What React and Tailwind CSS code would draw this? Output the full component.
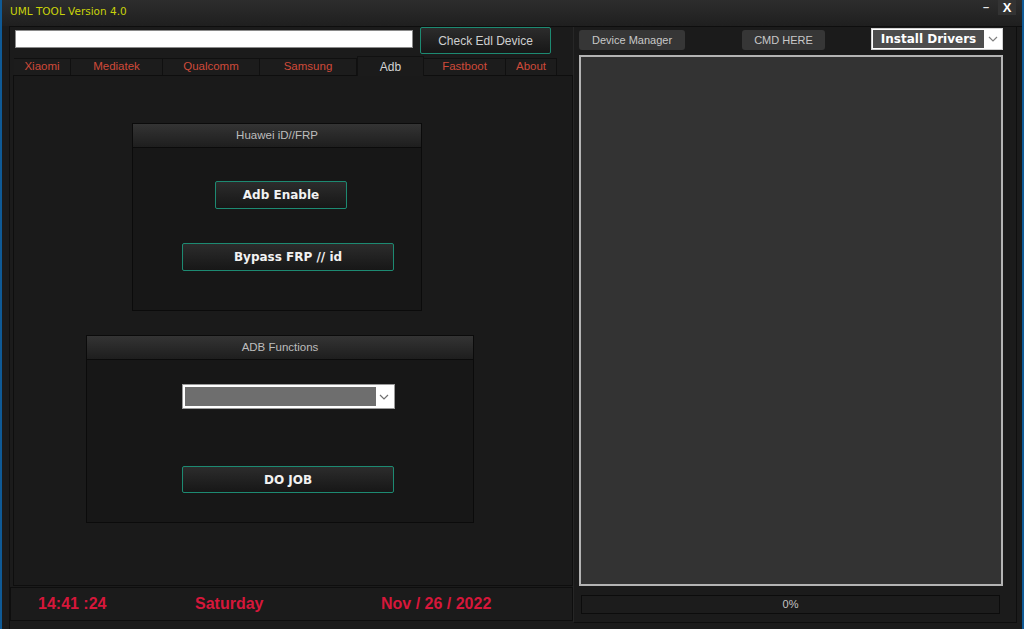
import React from "react";

const tabs = [
  { label: "Xiaomi", w: "w-[57px]" },
  { label: "Mediatek", w: "w-[92px]" },
  { label: "Qualcomm", w: "w-[97px]" },
  { label: "Samsung", w: "w-[97px]" },
  { label: "Adb", w: "w-[67px]", active: true },
  { label: "Fastboot", w: "w-[82px]" },
  { label: "About", w: "w-[51px]" },
];

const Chevron = ({ className }) => (
  <svg width="10" height="6" viewBox="0 0 10 6" className={className}>
    <path d="M1 1 L5 5 L9 1" fill="none" stroke="currentColor" strokeWidth="1.2" />
  </svg>
);

const TealButton = ({ children, className }) => (
  <button className={`flex items-center justify-center border border-[#1d8a72] rounded-[2px] bg-gradient-to-b from-[#2c2c2c] to-[#171717] text-[12px] font-bold text-[#f2f2f2] font-['DejaVu_Sans',sans-serif] ${className}`}>
    {children}
  </button>
);

const GroupBox = ({ title, className, children }) => (
  <div className={`flex flex-col border border-[#0b0b0b] bg-[#171717] ${className}`}>
    <div className="h-[24px] flex items-center justify-center bg-gradient-to-b from-[#343434] to-[#1e1e1e] border-b border-[#0b0b0b] text-[11.5px] text-[#bdbdbd]">
      {title}
    </div>
    <div className="flex-1 flex flex-col">{children}</div>
  </div>
);

export default function App() {
  return (
    <div className="w-[1024px] h-[629px] bg-[#1b1b1b] border-l-2 border-r-2 border-[#0f5a96] flex flex-col overflow-hidden font-['Liberation_Sans',Arial,sans-serif]">
      {/* title bar */}
      <div className="h-[26px] flex items-center bg-gradient-to-b from-[#2d2d2d] to-[#1f1f1f] pl-[8px]">
        <span className="text-[10.5px] text-[#c9d30a] -mt-[2px] font-['DejaVu_Sans',sans-serif]">UML TOOL Version 4.0</span>
        <div className="ml-auto self-start flex items-start h-[15px] mr-[6px]">
          <div className="w-[16px] h-[15px] flex items-center justify-center text-[#e8e8e8] text-[11px] font-bold">–</div>
          <div className="ml-[4px] w-[18px] h-[15px] bg-[#333333] flex items-center justify-center text-[13px] font-bold text-white">X</div>
        </div>
      </div>

      {/* body */}
      <div className="flex-1 flex border-t border-[#0e0e0e] ml-[7px] border-l">
        {/* left column */}
        <div className="w-[563px] flex flex-col">
          <div className="h-[28px] flex items-start">
            <div className="mt-[3px] ml-[5px] w-[398px] h-[18px] bg-white border border-[#8a8a8a]"></div>
            <button className="ml-[7px] w-[131px] h-[27px] border border-[#1d8a72] rounded-[2px] bg-gradient-to-b from-[#2c2c2c] to-[#171717] text-[12px] text-[#cfcfcf]">
              Check Edl Device
            </button>
          </div>

          <div className="h-[20px] flex items-end pl-[4px]">
            {tabs.map((t) =>
              t.active ? (
                <div key={t.label} className={`${t.w} h-[20px] flex items-start justify-center pt-[1px] bg-[#1b1b1b] border-t border-x border-[#111111] text-[12px] text-[#d4d4d4] -mb-[1px] relative z-10`}>
                  {t.label}
                </div>
              ) : (
                <div key={t.label} className={`${t.w} h-[17px] flex items-center justify-center border-t border-r border-[#101010] bg-[#1c1c1c] text-[11.5px] text-[#cf4a3a]`}>
                  {t.label}
                </div>
              )
            )}
          </div>

          <div className="ml-[3px] h-[511px] border border-[#0e0e0e] bg-[#1a1a1a] flex flex-col">
            <GroupBox title="Huawei iD//FRP" className="ml-[118px] mt-[47px] w-[290px] h-[188px]">
              <TealButton className="ml-[82px] mt-[33px] w-[132px] h-[28px]">Adb Enable</TealButton>
              <TealButton className="ml-[49px] mt-[34px] w-[212px] h-[28px]">Bypass FRP // id</TealButton>
            </GroupBox>

            <GroupBox title="ADB Functions" className="ml-[72px] mt-[24px] w-[388px] h-[188px]">
              <div className="ml-[95px] mt-[24px] w-[213px] h-[25px] bg-white border border-[#9a9a9a] flex items-center p-[2px]">
                <div className="w-[191px] h-full bg-[#6e6e6e]"></div>
                <div className="flex-1 flex items-center justify-center text-[#707070]">
                  <Chevron />
                </div>
              </div>
              <TealButton className="ml-[95px] mt-[57px] w-[212px] h-[27px]">DO JOB</TealButton>
            </GroupBox>
          </div>

          <div className="mt-[1px] h-[34px] border border-[#0e0e0e] flex items-center text-[16px] font-bold text-[#d6173a]">
            <span className="ml-[27px] w-[157px]">14:41 :24</span>
            <span className="w-[186px]">Saturday</span>
            <span>Nov / 26 / 2022</span>
          </div>
        </div>

        {/* right column */}
        <div className="flex-1 flex flex-col pl-[5px] border-l border-[#262626] mr-[5px] border-r border-b mb-[6px] border-r-[#0e0e0e] border-b-[#0e0e0e]">
          <div className="h-[28px] flex items-start">
            <button className="mt-[3px] w-[106px] h-[20px] rounded-[3px] bg-[#363636] text-[11px] text-[#c8c8c8]">
              Device Manager
            </button>
            <button className="ml-[57px] mt-[3px] w-[83px] h-[20px] rounded-[3px] bg-[#363636] text-[11px] text-[#c8c8c8]">
              CMD HERE
            </button>
            <div className="ml-[46px] mt-[1px] w-[132px] h-[22px] bg-white border border-[#d0d0d0] flex items-center p-[1px]">
              <div className="w-[111px] h-full bg-[#4d4d4d] flex items-center justify-center text-[12px] font-bold text-white font-['DejaVu_Sans',sans-serif]">
                Install Drivers
              </div>
              <div className="flex-1 flex items-center justify-center text-[#808080]">
                <Chevron />
              </div>
            </div>
          </div>

          <div className="w-[424px] h-[531px] bg-[#333333] border-2 border-[#b4b4b4]"></div>

          <div className="ml-[2px] mt-[9px] w-[419px] h-[19px] bg-[#1c1c1c] border border-[#0c0c0c] flex items-center justify-center text-[11px] text-[#c4c4c4]">
            0%
          </div>
        </div>
      </div>
    </div>
  );
}
